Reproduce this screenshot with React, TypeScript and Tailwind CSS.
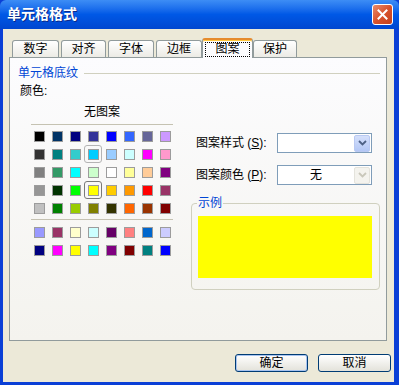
const font = { fontFamily: '"Liberation Sans", "Noto Sans CJK SC", sans-serif' };

const rows1 = [
  ["#000000", "#003366", "#000080", "#333399", "#0000ff", "#3366ff", "#666699", "#cc99ff"],
  ["#333333", "#008080", "#33cccc", "#00ccff", "#99ccff", "#ccffff", "#ff00ff", "#ff99cc"],
  ["#808080", "#339966", "#00ffff", "#ccffcc", "#ffffff", "#ffff99", "#ffcc99", "#800080"],
  ["#969696", "#003300", "#00ff00", "#ffff00", "#ffcc00", "#ff9900", "#ff0000", "#993366"],
  ["#c0c0c0", "#008000", "#99cc00", "#808000", "#333300", "#ff6600", "#993300", "#800000"],
];

const rows2 = [
  ["#9999ff", "#993366", "#ffffcc", "#ccffff", "#660066", "#ff8080", "#0066cc", "#ccccff"],
  ["#000080", "#ff00ff", "#ffff00", "#00ffff", "#800080", "#800000", "#008080", "#0000ff"],
];

function Swatches({ rows, selected }: { rows: string[][]; selected: Record<string, string> }) {
  return (
    <div className="grid grid-cols-8 w-[144px]">
      {rows.map((row, r) =>
        row.map((c, i) => {
          const sel = selected[`${r}-${i}`];
          return (
            <div
              key={`${r}-${i}`}
              className={
                "w-[18px] h-[18px] flex items-center justify-center rounded-[3px] " +
                (sel === "on" ? "border border-[#7a7a7a]" : sel === "hover" ? "border border-[#b4b4b4]" : "")
              }
            >
              <div className="w-[11px] h-[11px] border border-[#9c9c9c]" style={{ backgroundColor: c }} />
            </div>
          );
        })
      )}
    </div>
  );
}

function Arrow({ disabled }: { disabled?: boolean }) {
  return (
    <div
      className={
        "w-[16px] h-[17px] rounded-[2px] flex items-center justify-center border " +
        (disabled
          ? "bg-[#f4f3ee] border-[#e4e3dc]"
          : "bg-gradient-to-b from-[#d5e0fb] to-[#b3c7f5] border-[#b9c9f2]")
      }
    >
      <svg width="9" height="6" viewBox="0 0 9 6">
        <path d="M1 1 L4.5 4.5 L8 1" fill="none" stroke={disabled ? "#c9c7ba" : "#4d6185"} strokeWidth="1.8" />
      </svg>
    </div>
  );
}

function Tab({ label, w, active, cls = "" }: { label: string; w: string; active?: boolean; cls?: string }) {
  if (active) {
    return (
      <div
        className={`${w} h-[20px] -mb-[1px] relative z-10 flex items-center justify-center border border-b-0 border-[#919b9c] border-t-[2px] border-t-[#e68b2c] rounded-t-[3px] bg-[#fcfcfe] shadow-[inset_0_1px_0_#ffc83c] ${cls}`}
      >
        <span className="border border-dotted border-black px-[9px] leading-[13px] text-[12px]">{label}</span>
      </div>
    );
  }
  return (
    <div
      className={`${w} h-[17px] flex items-center justify-center border border-b-0 border-[#919b9c] rounded-t-[3px] bg-gradient-to-b from-white to-[#ecebe5] text-[12px] ${cls}`}
    >
      {label}
    </div>
  );
}

export default function App() {
  return (
    <div className="w-[399px] h-[385px] flex flex-col bg-[#0a3fd6] text-black" style={font}>
      <div className="h-[29px] flex items-center justify-between pl-[7px] pr-[6px] bg-gradient-to-b from-[#3d8df5] via-[#0058e6] to-[#0046d0] rounded-t-[6px]">
        <span className="text-white font-bold text-[14px] [text-shadow:1px_1px_0_#0a2a8a]">单元格格式</span>
        <div className="w-[21px] h-[21px] rounded-[3px] border border-white bg-gradient-to-br from-[#e88a6a] via-[#d8522c] to-[#c4401c] flex items-center justify-center">
          <svg width="11" height="11" viewBox="0 0 11 11">
            <path d="M1.5 1.5 L9.5 9.5 M9.5 1.5 L1.5 9.5" stroke="white" strokeWidth="2" strokeLinecap="square" />
          </svg>
        </div>
      </div>

      <div className="flex-1 ml-[3px] mr-[5px] mb-[3px] bg-[#ece9d8] flex flex-col">
        <div className="h-[28px] flex items-end pl-[9px]">
          <Tab label="数字" w="w-[47px]" />
          <Tab label="对齐" w="w-[45px]" cls="ml-[2px]" />
          <Tab label="字体" w="w-[46px]" cls="ml-[2px]" />
          <Tab label="边框" w="w-[46px]" cls="ml-[2px]" />
          <Tab label="图案" w="w-[51px]" active />
          <Tab label="保护" w="w-[44px]" />
        </div>

        <div className="ml-[6px] w-[378px] h-[284px] border border-[#919b9c] bg-gradient-to-b from-[#fcfcfe] to-[#f4f3ee] text-[12px]">
          <div className="mt-[7px] ml-[8px] mr-[6px] h-[16px] flex items-center gap-[6px]">
            <span className="text-[#0046d5]">单元格底纹</span>
            <div className="flex-1 h-px bg-[#d0d0bf]" />
          </div>
          <div className="mt-[2px] ml-[10px] h-[16px] leading-[16px]">颜色:</div>

          <div className="flex">
            <div className="ml-[20px] w-[144px]">
              <div className="mt-[5px] h-[16px] leading-[16px] text-center">无图案</div>
              <div className="mt-[4px] ml-[1px] w-[142px] h-px bg-[#c5c2b2]" />
              <div className="mt-[2px]">
                <Swatches rows={rows1} selected={{ "1-3": "hover", "3-3": "on" }} />
              </div>
              <div className="mt-[2px] ml-[1px] w-[142px] h-px bg-[#c5c2b2]" />
              <div className="mt-[3px]">
                <Swatches rows={rows2} selected={{}} />
              </div>
            </div>

            <div className="ml-[22px] flex flex-col">
              <div className="mt-[34px] flex items-center">
                <span className="w-[81px]">
                  图案样式 (<span className="underline">S</span>):
                </span>
                <div className="w-[95px] h-[20px] border border-[#7f9db9] bg-white flex items-center justify-end pr-[1px]">
                  <Arrow />
                </div>
              </div>
              <div className="mt-[12px] flex items-center">
                <span className="w-[81px]">
                  图案颜色 (<span className="underline">P</span>):
                </span>
                <div className="w-[95px] h-[20px] border border-[#7f9db9] bg-white flex items-center pr-[1px]">
                  <span className="flex-1 text-center">无</span>
                  <Arrow disabled />
                </div>
              </div>
              <fieldset className="mt-[11px] -ml-[5px] w-[189px] h-[94px] border border-[#d0d0bf] rounded-[4px]">
                <legend className="ml-[5px] px-[1px] text-[#0046d5] leading-[14px]">示例</legend>
                <div className="mt-[6px] ml-[6px] w-[174px] h-[62px] bg-[#ffff00]" />
              </fieldset>
            </div>
          </div>
        </div>

        <div className="mt-[13px] flex justify-end gap-[10px] pr-[3px] text-[12px]">
          <button className="w-[73px] h-[18px] rounded-[3px] border border-[#003c74] bg-gradient-to-b from-white to-[#e3e2da] shadow-[inset_0_0_0_1px_#a8c4f0] leading-[16px]">
            确定
          </button>
          <button className="w-[73px] h-[18px] rounded-[3px] border border-[#003c74] bg-gradient-to-b from-white to-[#e3e2da] leading-[16px]">
            取消
          </button>
        </div>
      </div>
    </div>
  );
}
